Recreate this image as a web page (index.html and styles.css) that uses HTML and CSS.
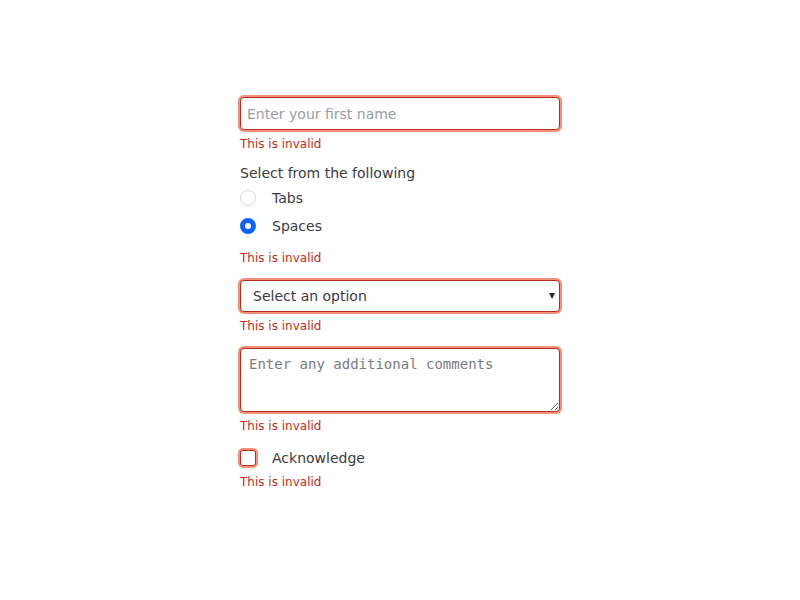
FILE: index.html
```html
<!DOCTYPE html>
<html>
<head>
<meta charset="utf-8">
<link rel="stylesheet" href="styles.css">
</head>
<body>
<form class="form">
  <div class="field">
    <input class="control text-input" type="text" placeholder="Enter your first name">
    <div class="error">This is invalid</div>
  </div>
  <fieldset class="field group">
    <legend class="legend">Select from the following</legend>
    <label class="choice radio-row"><input class="radio" type="radio" name="indent"><span>Tabs</span></label>
    <label class="choice radio-row"><input class="radio" type="radio" name="indent" checked><span>Spaces</span></label>
    <div class="error error-group">This is invalid</div>
  </fieldset>
  <div class="field">
    <div class="select-wrap">
      <select class="control select-input"><option>Select an option</option></select>
    </div>
    <div class="error">This is invalid</div>
  </div>
  <div class="field">
    <textarea class="control textarea" placeholder="Enter any additional comments"></textarea>
    <div class="error">This is invalid</div>
  </div>
  <div class="field">
    <label class="choice check-row"><input class="checkbox" type="checkbox"><span>Acknowledge</span></label>
    <div class="error">This is invalid</div>
  </div>
</form>
</body>
</html>
```
FILE: styles.css
```css
* { box-sizing: border-box; }
html, body { margin: 0; padding: 0; background: #ffffff; }
body {
  font-family: "DejaVu Sans", "Liberation Sans", sans-serif;
  font-size: 14px;
  color: #3b3b40;
}
.form {
  width: 320px;
  margin: 97px 0 0 240px;
  display: flex;
  flex-direction: column;
}
.field {
  display: flex;
  flex-direction: column;
  margin: 0 0 14px 0;
  padding: 0;
  border: 0;
  min-width: 0;
}
.control {
  width: 320px;
  border: 1px solid #b0301c;
  border-radius: 4px;
  box-shadow: 0 0 0 2px #f6907c;
  background: #fff;
  font-family: "DejaVu Sans", sans-serif;
  font-size: 14px;
  color: #3b3b40;
  outline: none;
  margin: 0;
}
.text-input {
  height: 33px;
  padding: 0 6px;
}
.text-input::placeholder { color: #9a9ca3; }
.error {
  margin-top: 6px;
  font-size: 12px;
  line-height: 16px;
  color: #c42b1c;
}
.group { margin-top: -1px; }
.legend {
  padding: 0;
  font-size: 14px;
  line-height: 16px;
  margin-bottom: 7px;
}
.choice {
  display: flex;
  align-items: center;
  gap: 16px;
  height: 20px;
  line-height: 20px;
}
.radio-row + .radio-row { margin-top: 8px; }
.radio {
  appearance: none;
  -webkit-appearance: none;
  width: 16px;
  height: 16px;
  margin: 0;
  border-radius: 50%;
  border: 1px solid #d6d6d8;
  background: #fff;
}
.radio:checked {
  border: 5px solid #0d62ff;
}
.error-group { margin-top: 14px; }
.select-wrap { position: relative; }
.select-input {
  appearance: none;
  -webkit-appearance: none;
  height: 32px;
  padding: 0 24px 0 12px;
}
.select-wrap::after {
  content: "▾";
  position: absolute;
  right: 5px;
  top: 8px;
  font-size: 12px;
  line-height: 14px;
  color: #2a2a2e;
  pointer-events: none;
}
.textarea {
  display: block;
  height: 64px;
  padding: 7px 8px;
  font-family: "DejaVu Sans Mono", monospace;
  font-size: 14px;
  line-height: 16px;
  resize: vertical;
}
.textarea::placeholder { color: #7b7b7f; }
.checkbox {
  appearance: none;
  -webkit-appearance: none;
  width: 16px;
  height: 16px;
  margin: 0;
  border: 1px solid #b0301c;
  border-radius: 3px;
  box-shadow: 0 0 0 2px #f6907c;
  background: #fff;
}
```
